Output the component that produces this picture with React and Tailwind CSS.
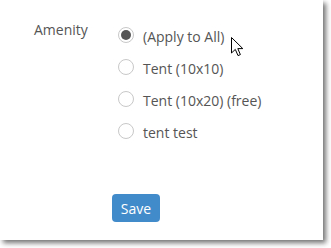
import React, { useState } from "react";

const options = ["(Apply to All)", "Tent (10x10)", "Tent (10x20) (free)", "tent test"];

const Radio = ({ checked }) => (
  <span className="ml-[6px] mr-[9px] flex h-[16px] w-[16px] shrink-0 items-center justify-center rounded-full border border-[#c8c8c8] bg-white">
    {checked && <span className="h-[10px] w-[10px] rounded-full bg-[#555555]" />}
  </span>
);

const Cursor = () => (
  <svg
    className="absolute left-[231px] top-[37px]"
    width="13"
    height="20"
    viewBox="0 0 13 20"
  >
    <path
      d="M0.5 0.5 L0.5 16 L4.3 12.4 L7 18.6 L9.4 17.6 L6.8 11.6 L11.8 11.6 Z"
      fill="#fff"
      stroke="#000"
      strokeWidth="1"
      strokeLinejoin="round"
    />
  </svg>
);

const App = () => {
  const [selected, setSelected] = useState(0);

  return (
    <div
      className="relative h-[248px] w-[331px] overflow-hidden bg-white"
      style={{ fontFamily: '"Open Sans", sans-serif' }}
    >
      <div className="h-[240px] w-[323px] bg-white shadow-[3px_3px_5px_rgba(0,0,0,0.55)]">
        <div className="flex pl-[34px] pt-[20px] text-[14px] text-[#555555]">
          <div className="w-[78px] leading-[20px]">Amenity</div>
          <div className="-mt-[1px] flex flex-col">
            {options.map((opt, i) => (
              <label
                key={i}
                className="flex h-[32px] cursor-pointer items-center"
                onClick={() => setSelected(i)}
              >
                <Radio checked={selected === i} />
                <span className="pt-[3px] leading-[20px]">{opt}</span>
              </label>
            ))}
            <button className="mt-[47px] flex h-[28px] w-[48px] items-center justify-center rounded-[4px] bg-[#428bca] text-[14px] text-white">
              Save
            </button>
          </div>
        </div>
      </div>
      <Cursor />
    </div>
  );
};

export default App;
